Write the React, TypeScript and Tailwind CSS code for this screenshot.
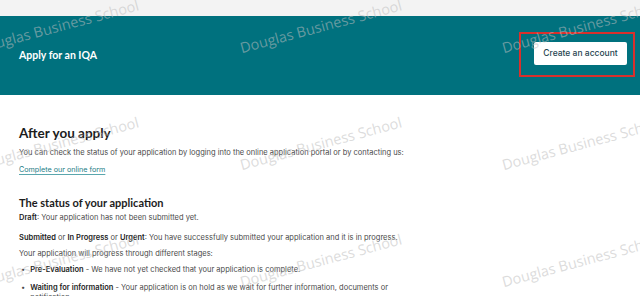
const marks = [
  { x: -20, y: 4 },
  { x: 243, y: 4 },
  { x: 505, y: 4 },
  { x: -20, y: 121 },
  { x: 243, y: 121 },
  { x: 505, y: 121 },
  { x: -20, y: 238 },
  { x: 243, y: 238 },
  { x: 505, y: 238 },
];

function Watermarks() {
  return (
    <div className="pointer-events-none absolute inset-0 overflow-hidden">
      {marks.map((m, i) => (
        <span
          key={i}
          className="absolute origin-bottom-left -rotate-[15deg] whitespace-nowrap font-['Open_Sans',sans-serif] text-[14.5px] leading-[20px] text-[rgba(190,190,190,0.55)]"
          style={{ left: m.x, top: m.y + 34 }}
        >
          Douglas Business School
        </span>
      ))}
    </div>
  );
}

export default function App() {
  return (
    <div className="relative h-[296px] w-[640px] overflow-hidden bg-white font-['Inter',sans-serif]">
      <div className="h-4 bg-[#f3f3f3]" />

      <header className="flex h-[79px] items-center justify-between bg-[#00717e] pl-[19px] pr-[5px]">
        <h1 className="font-['Lato',sans-serif] text-[10.5px] font-bold text-white">Apply for an IQA</h1>
        <div className="mt-[-2px] border-2 border-[#d9302c] pb-[10px] pl-[13px] pr-[6px] pt-[8px]">
          <button className="flex h-[23px] w-[93px] items-center justify-center rounded-[2px] bg-white text-[8.5px] font-medium text-[#1f4450]">
            Create an account
          </button>
        </div>
      </header>

      <main className="px-[19px] pt-[29px] text-[7.5px] text-[#4a4a4a]">
        <h2 className="font-['Lato',sans-serif] text-[13.5px] font-bold leading-[18px] text-[#1c1c1c]">After you apply</h2>
        <p className="mt-[6px] leading-[10px]">
          You can check the status of your application by logging into the online application portal or by contacting us:
        </p>
        <a className="mt-[7px] inline-block text-[7.2px] leading-[10px] text-[#1d7d86] underline decoration-[#5aa6ad] underline-offset-2">
          Complete our online form
        </a>

        <h3 className="mt-[20px] font-['Lato',sans-serif] text-[11px] font-bold leading-[15px] text-[#1c1c1c]">
          The status of your application
        </h3>
        <p className="mt-[3px] leading-[10px]">
          <b className="font-semibold text-[#222]">Draft</b>: Your application has not been submitted yet.
        </p>
        <p className="mt-[10px] leading-[10px]">
          <b className="font-semibold text-[#222]">Submitted</b> or <b className="font-semibold text-[#222]">In Progress</b> or{" "}
          <b className="font-semibold text-[#222]">Urgent</b>: You have successfully submitted your application and it is in progress.
        </p>
        <p className="mt-[6px] leading-[10px]">Your application will progress through different stages:</p>
        <ul className="mt-[6px] flex flex-col gap-[8px] leading-[10px]">
          <li className="flex gap-[5px] pl-[2px]">
            <span>•</span>
            <span>
              <b className="font-semibold text-[#222]">Pre-Evaluation</b> - We have not yet checked that your application is complete.
            </span>
          </li>
          <li className="flex gap-[5px] pl-[2px]">
            <span>•</span>
            <span>
              <b className="font-semibold text-[#222]">Waiting for information</b> - Your application is on hold as we wait for further information, documents or
              <br />
              notification
            </span>
          </li>
        </ul>
      </main>

      <Watermarks />
    </div>
  );
}
